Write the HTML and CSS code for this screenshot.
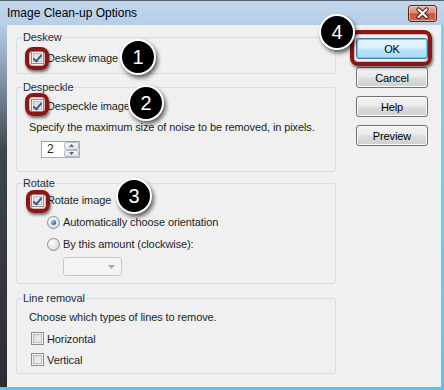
FILE: index.html
```html
<!DOCTYPE html>
<html lang="en">
<head>
  <meta charset="utf-8">
  <title>Image Clean-up Options</title>
  <link rel="stylesheet" href="styles.css">
</head>
<body>
  <div class="window">
    <div class="titlebar">
      <span class="title">Image Clean-up Options</span>
      <span class="close-btn">
        <svg width="27" height="15" viewBox="0 0 27 15">
          <path d="M9.5 3.5 L17.5 11 M17.5 3.5 L9.5 11" stroke="#4a1a10" stroke-width="4.2" stroke-linecap="round"/>
          <path d="M9.5 3.5 L17.5 11 M17.5 3.5 L9.5 11" stroke="#fff" stroke-width="2.2" stroke-linecap="round"/>
        </svg>
      </span>
    </div>

    <div class="client">
      <div class="groups">
        <fieldset class="group group-deskew">
          <legend>Deskew</legend>
          <div class="group-body">
            <label class="row"><span class="check checked"></span>Deskew image</label>
          </div>
        </fieldset>

        <fieldset class="group group-despeckle">
          <legend>Despeckle</legend>
          <div class="group-body">
            <label class="row"><span class="check checked"></span>Despeckle image</label>
            <div class="row text-row">Specify the maximum size of noise to be removed, in pixels.</div>
            <div class="spin">
              <span class="spin-value">2</span>
              <span class="spin-arrows">
                <span class="spin-arrow"><svg width="5" height="3" viewBox="0 0 5 3"><path d="M0 3 L2.5 0 L5 3 Z" fill="#4e6a90"/></svg></span>
                <span class="spin-arrow"><svg width="5" height="3" viewBox="0 0 5 3"><path d="M0 0 L2.5 3 L5 0 Z" fill="#4e6a90"/></svg></span>
              </span>
            </div>
          </div>
        </fieldset>

        <fieldset class="group group-rotate">
          <legend>Rotate</legend>
          <div class="group-body">
            <label class="row"><span class="check checked"></span>Rotate image</label>
            <label class="row sub"><span class="radio checked"></span>Automatically choose orientation</label>
            <label class="row sub"><span class="radio"></span>By this amount (clockwise):</label>
            <div class="combo">
              <svg width="7" height="4" viewBox="0 0 7 4"><path d="M0 0 L7 0 L3.5 4 Z" fill="#a6a6a6"/></svg>
            </div>
          </div>
        </fieldset>

        <fieldset class="group group-lines">
          <legend>Line removal</legend>
          <div class="group-body">
            <div class="row text-row">Choose which types of lines to remove.</div>
            <label class="row"><span class="check"></span>Horizontal</label>
            <label class="row"><span class="check"></span>Vertical</label>
          </div>
        </fieldset>
      </div>

      <div class="buttons">
        <button class="btn btn-default">OK</button>
        <button class="btn">Cancel</button>
        <button class="btn">Help</button>
        <button class="btn">Preview</button>
      </div>
    </div>

    <!-- annotation marks -->
    <div class="ring ring-deskew"></div>
    <div class="ring ring-despeckle"></div>
    <div class="ring ring-rotate"></div>
    <div class="ring ring-ok"></div>

    <div class="callout callout-1">1</div>
    <div class="callout callout-2">2</div>
    <div class="callout callout-3">3</div>
    <div class="callout callout-4">4</div>
  </div>
</body>
</html>
```

FILE: styles.css
```css
* {
  box-sizing: border-box;
}

html, body {
  margin: 0;
  padding: 0;
}

body {
  width: 444px;
  height: 390px;
  overflow: hidden;
  font-family: "Liberation Sans", Arial, sans-serif;
  font-size: 11px;
  letter-spacing: -0.1px;
  color: #1b1f27;
  background: #2a2d31;
}

.window {
  position: relative;
  width: 444px;
  height: 390px;
  background:
    linear-gradient(#5ec4ee, #5ec4ee) left bottom / 100% 3px no-repeat,
    linear-gradient(#7fd0f0, #5ec4ee) right bottom / 3px 365px no-repeat,
    linear-gradient(#c3d8ed 0, #b5cde6 25px, #8b9cb0 70px, #40454c 150px, #2a2d32 100%);
  border-top: 1px solid #5a6470;
}

/* title bar */
.titlebar {
  height: 24px;
  display: flex;
  justify-content: space-between;
  align-items: flex-start;
}

.title {
  padding: 5px 0 0 7px;
  font-size: 12px;
  line-height: 15px;
  letter-spacing: 0;
  color: #000;
}

.close-btn {
  margin: 4px 7px 0 0;
  width: 29px;
  height: 17px;
  border: 1px solid #5c2519;
  border-radius: 3px;
  background: linear-gradient(#eab1a2 0%, #dc8b76 45%, #c6523a 52%, #d0694e 100%);
  box-shadow: inset 0 0 0 1px rgba(255, 230, 220, 0.5);
  display: flex;
}

/* client area */
.client {
  margin-left: 7px;
  width: 434px;
  height: 362px;
  background: #f0f0f0;
  display: flex;
  padding: 5px 0 0 9px;
}

.groups {
  width: 320px;
  display: flex;
  flex-direction: column;
}

.group {
  margin: 0;
  padding: 0 0 0 5px;
  border: 1px solid #d5dfe5;
  border-radius: 3px;
  min-width: 0;
}

.group legend {
  padding: 0 1px;
  line-height: 14px;
  color: #1c2c44;
}

.group-body {
  padding-left: 9px;
  display: flex;
  flex-direction: column;
}

.row {
  display: flex;
  align-items: center;
  gap: 3px;
  height: 21px;
}

.text-row {
  margin-left: -2px;
}

.sub {
  margin-left: 16px;
}

.group-deskew .group-body {
  padding-top: 3px;
  padding-bottom: 5px;
}

.group-despeckle {
  margin-top: 6px;
}

.group-despeckle .group-body {
  padding-top: 1px;
  padding-bottom: 13px;
}

.group-rotate {
  margin-top: 4px;
}

.group-rotate .group-body {
  padding-bottom: 7px;
}

.group-rotate .row {
  height: 22px;
}

.group-rotate .row:first-child {
  margin-top: -1px;
}

.group-lines {
  margin-top: 7px;
}

.group-lines .group-body {
  padding-top: 1px;
  padding-bottom: 3px;
}

.group-lines .text-row {
  height: 22px;
}

/* checkbox and radio */
.check {
  flex: none;
  width: 13px;
  height: 13px;
  border: 1px solid #8e8f8f;
  background: linear-gradient(135deg, #d0d4da 0%, #e9eaec 55%, #f8f8f8 100%);
  box-shadow: inset 0 0 0 1px #f4f4f4, inset 0 0 0 2px #b8bcc2;
  position: relative;
}

.check.checked::after {
  content: "";
  position: absolute;
  left: 3px;
  top: 1px;
  width: 3px;
  height: 7px;
  border: solid #3d5a95;
  border-width: 0 2px 2px 0;
  transform: rotate(40deg);
}

.radio {
  flex: none;
  width: 13px;
  height: 13px;
  border-radius: 50%;
  border: 1px solid #8e8f8f;
  background: radial-gradient(circle at 35% 35%, #fbfbfb 0%, #e0e2e5 60%, #c9ccd1 100%);
  display: flex;
  align-items: center;
  justify-content: center;
}

.radio.checked::after {
  content: "";
  width: 5px;
  height: 5px;
  border-radius: 50%;
  background: radial-gradient(circle at 35% 35%, #9fd6f8 0%, #2d78c2 55%, #16508f 100%);
}

/* spin box */
.spin {
  margin: 4px 0 0 10px;
  width: 39px;
  height: 17px;
  border: 1px solid #abadb3;
  border-top-color: #9ca2aa;
  background: #fff;
  display: flex;
}

.spin-value {
  flex: 1;
  padding-left: 5px;
  line-height: 15px;
  font-size: 12px;
}

.spin-arrows {
  width: 16px;
  display: flex;
  flex-direction: column;
  padding: 0 0 0 1px;
}

.spin-arrow {
  flex: 1;
  border: 1px solid #b6bcc6;
  border-radius: 2px;
  background: linear-gradient(#f4f4f4, #e2e4e8);
  display: flex;
  align-items: center;
  justify-content: center;
}

/* disabled combo box */
.combo {
  margin: 2px 0 0 32px;
  width: 59px;
  height: 19px;
  border: 1px solid #c6cacd;
  border-radius: 3px;
  background: #f4f4f4;
  display: flex;
  align-items: center;
  justify-content: flex-end;
  padding-right: 6px;
}

/* buttons */
.buttons {
  margin: 8px 0 0 20px;
  width: 72px;
  display: flex;
  flex-direction: column;
  gap: 8px;
}

.btn {
  height: 21px;
  padding: 0;
  border: 1px solid #707070;
  border-radius: 3px;
  background: linear-gradient(#f2f2f2 0%, #ebebeb 48%, #dddddd 52%, #cfcfcf 100%);
  box-shadow: inset 0 0 0 1px #fbfbfb;
  font-family: "Liberation Sans", Arial, sans-serif;
  font-size: 11px;
  letter-spacing: -0.1px;
  color: #000;
}

.btn-default {
  border-color: #3c7fb1;
  background: linear-gradient(#eaf6fd 0%, #d9f0fc 48%, #bee6fd 52%, #a7d9f5 100%);
  box-shadow: inset 0 0 0 1px #5fd0f4;
}

/* annotations */
.ring {
  position: absolute;
  border: 4px solid #8a1616;
  border-radius: 8px;
  box-shadow: 1px 2px 3px rgba(0, 0, 0, 0.55), inset 0 0 0 1px rgba(190, 70, 70, 0.35);
}

.ring-deskew {
  left: 25px;
  top: 46px;
  width: 24px;
  height: 23px;
}

.ring-despeckle {
  left: 25px;
  top: 92px;
  width: 24px;
  height: 23px;
}

.ring-rotate {
  left: 26px;
  top: 189px;
  width: 24px;
  height: 23px;
}

.ring-ok {
  left: 350px;
  top: 29px;
  width: 82px;
  height: 36px;
}

.callout {
  position: absolute;
  width: 36px;
  height: 36px;
  border-radius: 50%;
  background: #000;
  border: 2px solid #fff;
  box-shadow: 2px 3px 4px rgba(0, 0, 0, 0.6);
  color: #fff;
  font-family: "Liberation Sans", Arial, sans-serif;
  font-size: 20px;
  letter-spacing: 0;
  display: flex;
  align-items: center;
  justify-content: center;
}

.callout-1 {
  left: 120px;
  top: 38px;
}

.callout-2 {
  left: 128px;
  top: 84px;
}

.callout-3 {
  left: 116px;
  top: 177px;
}

.callout-4 {
  left: 319px;
  top: 13px;
}
```
